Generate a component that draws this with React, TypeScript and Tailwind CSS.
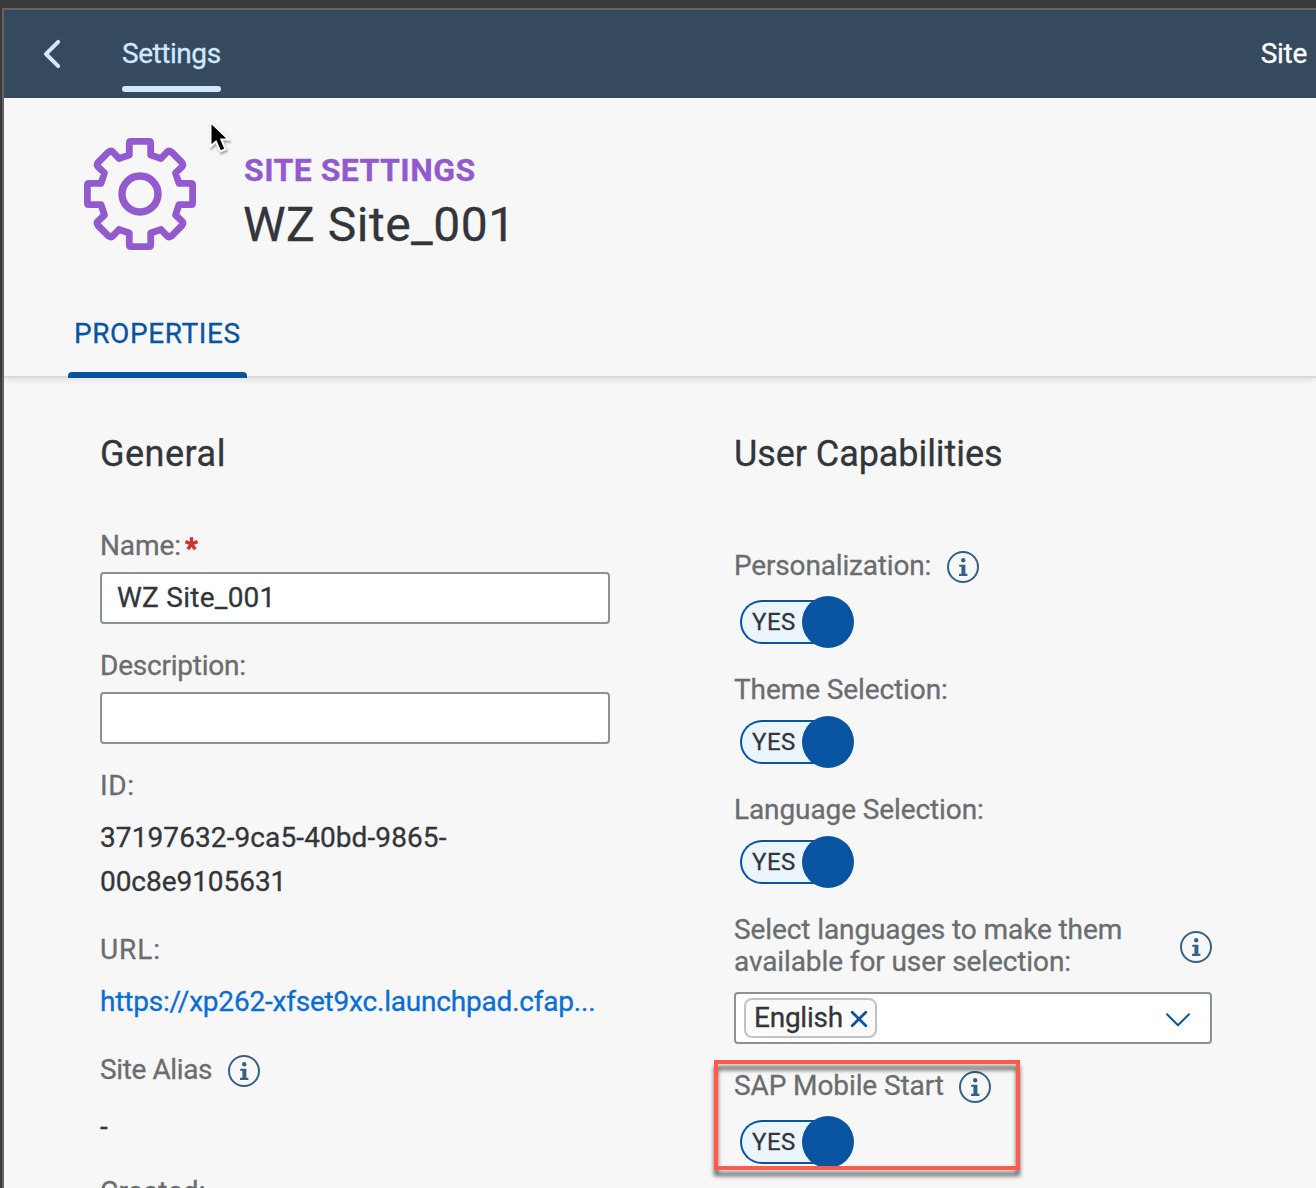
import React from "react";

function InfoIcon() {
  return (
    <svg width="32" height="32" viewBox="0 0 32 32" className="shrink-0" fill="none">
      <circle cx="16" cy="16" r="15" stroke="#346187" strokeWidth="2" />
      <circle cx="16.2" cy="9.3" r="2.2" fill="#346187" />
      <path d="M12.2 13.7h6.2v9.1h2v2.1h-8.4v-2.1h2.4v-7h-2.2z" fill="#346187" />
    </svg>
  );
}

function Toggle() {
  return (
    <div className="ml-[6px] flex h-[52px] w-[114px] items-center">
      <div className="flex h-[44px] w-[88px] items-center rounded-l-[22px] border-2 border-r-0 border-[#0854a0] bg-[#ebf5fe] pl-[10px] text-[24px] leading-[32px] tracking-[0.5px] text-[#32363a]">
        YES
      </div>
      <div className="-ml-[26px] size-[52px] shrink-0 rounded-full bg-[#0854a0]" />
    </div>
  );
}

const label = "block whitespace-nowrap leading-[34px] text-[#6a6d70]";

export default function App() {
  return (
    <div className="h-[1188px] w-[1316px] overflow-hidden bg-[#3a3a3a] pl-[2px] pt-[8px] font-[Roboto,sans-serif] text-[28px] tracking-[-0.1px] text-[#32363a] [-webkit-text-stroke:0.3px]">
      <div className="relative h-[1180px] border-l-2 border-t-2 border-[#656462] bg-[#f7f7f7]">
        <header className="flex h-[88px] justify-between bg-[#354a5f] text-[#d1e8ff]">
          <div className="flex">
            <svg width="20" height="32" viewBox="0 0 20 32" className="ml-[39px] mt-[28px]" fill="none">
              <path d="M15.2 3.8 3 16l12.2 12.2" stroke="#d1e8ff" strokeWidth="4" strokeLinecap="round" strokeLinejoin="round" />
            </svg>
            <div className="ml-[59px] flex w-[99px] flex-col whitespace-nowrap">
              <span className="mt-[28px] leading-[32px] tracking-[-0.45px]">Settings</span>
              <span className="mt-[16px] h-[6px] rounded-full bg-[#d1e8ff]" />
            </div>
          </div>
          <span className="mr-[9px] mt-[28px] leading-[32px] tracking-[-0.3px] text-white">Site</span>
        </header>

        <section className="flex h-[280px] flex-col justify-between border-b-2 border-[#d9d9d9] shadow-[0_4px_6px_-1px_rgba(0,0,0,0.08)]">
          <div className="flex pl-[80px] pt-[40px]">
            <svg width="112" height="112" viewBox="0 0 112 112" fill="none" stroke="#925ace" strokeWidth="6.8" strokeLinejoin="round">
              <circle cx="56" cy="56" r="18" strokeWidth="7.4" />
              <path d="M46.8 3.4H65.2Q66.7 3.4 66.7 5V17L77 20.5L83 14.2Q85 12.2 87.5 14L98 24.5Q99.8 27 97.8 29L91.5 35L95 45.3H107Q108.6 45.3 108.6 46.8V65.2Q108.6 66.7 107 66.7H95L91.5 77L97.8 83Q99.8 85 98 87.5L87.5 98Q85 99.8 83 97.8L77 91.5L66.7 95V107Q66.7 108.6 65.2 108.6H46.8Q45.3 108.6 45.3 107V95L35 91.5L29 97.8Q27 99.8 24.5 98L14 87.5Q12.2 85 14.2 83L20.5 77L17 66.7H5Q3.4 66.7 3.4 65.2V46.8Q3.4 45.3 5 45.3H17L20.5 35L14.2 29Q12.2 27 14 24.5L24.5 14Q27 12.2 29 14.2L35 20.5L45.3 17V5Q45.3 3.4 46.8 3.4Z" />
            </svg>
            <div className="ml-[48px] mt-[12px] whitespace-nowrap">
              <div className="text-[32px] font-bold leading-[40px] tracking-[0.45px] text-[#925ace]">SITE SETTINGS</div>
              <div className="-ml-[1px] mt-[7px] text-[48px] leading-[56px] tracking-[0.5px]">WZ Site_001</div>
            </div>
          </div>
          <div className="-mb-[2px] ml-[64px] flex w-[179px] flex-col whitespace-nowrap text-[#0854a0]">
            <span className="mb-[22px] pl-[6px] leading-[32px] tracking-[0.6px]">PROPERTIES</span>
            <span className="h-[6px] rounded-t-[4px] bg-[#0854a0]" />
          </div>
        </section>

        <main className="flex gap-[124px] pl-[96px] pt-[54px]">
          <div className="w-[510px]">
            <h2 className="text-[36px] leading-[44px] tracking-[0.5px]">General</h2>
            <label className={label + " mt-[53px] flex"}>
              Name:
              <svg width="13" height="13" viewBox="0 0 13 13" className="ml-[4px] mt-[8px]" fill="none">
                <path d="M6.5 7V.3M6.5 7L.4 4.6M6.5 7l6.1-2.400M6.5 7l-3.7 5.3M6.5 7l3.7 5.3" stroke="#cc3333" strokeWidth="3.4" />
              </svg>
            </label>
            <div className="mt-[9px] flex h-[52px] items-center rounded-[4px] border-2 border-[#89919a] bg-white pl-[15px] leading-[32px] tracking-[0.25px]">WZ Site_001</div>
            <label className={label + " mt-[25px] tracking-[-0.22px]"}>Description:</label>
            <div className="mt-[9px] h-[52px] rounded-[4px] border-2 border-[#89919a] bg-white" />
            <label className={label + " mt-[25px] tracking-[0.6px]"}>ID:</label>
            <div className="mt-[13px] whitespace-nowrap leading-[44px]">
              <div className="tracking-[0.1px]">37197632-9ca5-40bd-9865-</div>
              <div className="tracking-[-0.05px]">00c8e9105631</div>
            </div>
            <label className={label + " mt-[29px] tracking-[0.9px]"}>URL:</label>
            <div className="mt-[19px] whitespace-nowrap leading-[32px] tracking-[-0.2px] text-[#0a6ed1]">https://xp262-xfset9xc.launchpad.cfap...</div>
            <div className="mt-[35px] flex h-[34px]">
              <label className={label + " w-[128px] tracking-[-0.38px]"}>Site Alias</label>
              <div className="mt-[2px]"><InfoIcon /></div>
            </div>
            <div className="mt-[24px] leading-[32px]">-</div>
            <label className={label + " mt-[32px] tracking-[0.2px]"}>Created:</label>
          </div>

          <div className="w-[478px]">
            <h2 className="whitespace-nowrap text-[36px] leading-[44px] tracking-[-0.07px]">User Capabilities</h2>
            <div className="mt-[73px] flex h-[32px]">
              <label className={label + " w-[213px] tracking-[-0.17px]"}>Personalization:</label>
              <div className="mt-[2px]"><InfoIcon /></div>
            </div>
            <div className="mt-[15px]"><Toggle /></div>
            <label className={label + " mt-[25px]"}>Theme Selection:</label>
            <div className="mt-[9px]"><Toggle /></div>
            <label className={label + " mt-[25px]"}>Language Selection:</label>
            <div className="mt-[9px]"><Toggle /></div>
            <div className="mt-[26px] flex items-center justify-between">
              <p className="whitespace-nowrap leading-[32px] text-[#6a6d70]">
                Select languages to make them
                <br />
                available for user selection:
              </p>
              <div className="mt-[2px]"><InfoIcon /></div>
            </div>
            <div className="mt-[14px] flex h-[52px] items-center justify-between rounded-[4px] border-2 border-[#89919a] bg-white pl-[8px] pr-[20px]">
              <div className="flex h-[40px] w-[133px] items-center justify-between rounded-[8px] border-2 border-[#c2c2c2] bg-[#fafafa] pl-[8px] pr-[7px]">
                <span className="leading-[32px] tracking-[-0.25px]">English</span>
                <svg width="18" height="18" viewBox="0 0 18 18" className="mt-[1px]">
                  <path d="M2.2 2.2l13.6 13.6M15.8 2.2L2.2 15.8" stroke="#0854a0" strokeWidth="2.8" strokeLinecap="round" />
                </svg>
              </div>
              <svg width="24" height="14" viewBox="0 0 24 14" className="mt-[3px]" fill="none">
                <path d="M1 1.3l11 11 11-11" stroke="#0854a0" strokeWidth="2" strokeLinecap="round" strokeLinejoin="round" />
              </svg>
            </div>
            <div className="mt-[25px] flex h-[32px]">
              <label className={label + " w-[225px]"}>SAP Mobile Start</label>
              <div className="mt-[2px]"><InfoIcon /></div>
            </div>
            <div className="mt-[15px]"><Toggle /></div>
          </div>
        </main>

        <div className="absolute left-[710px] top-[1050px] h-[110px] w-[306px] border-4 border-[#ff5a4b] drop-shadow-[0px_6px_2px_rgba(0,0,0,0.6)]" />
        <svg width="32" height="44" viewBox="0 0 32 44" className="absolute left-[202px] top-[106px] drop-shadow-[1px_2px_1px_rgba(0,0,0,0.35)]">
          <path d="M4.500 6v24.6l5.400-5 4.400 9.800 5.200-2.200-4.200-9.800h7.200z" fill="#000" stroke="#fff" strokeWidth="2" />
        </svg>
      </div>
    </div>
  );
}
